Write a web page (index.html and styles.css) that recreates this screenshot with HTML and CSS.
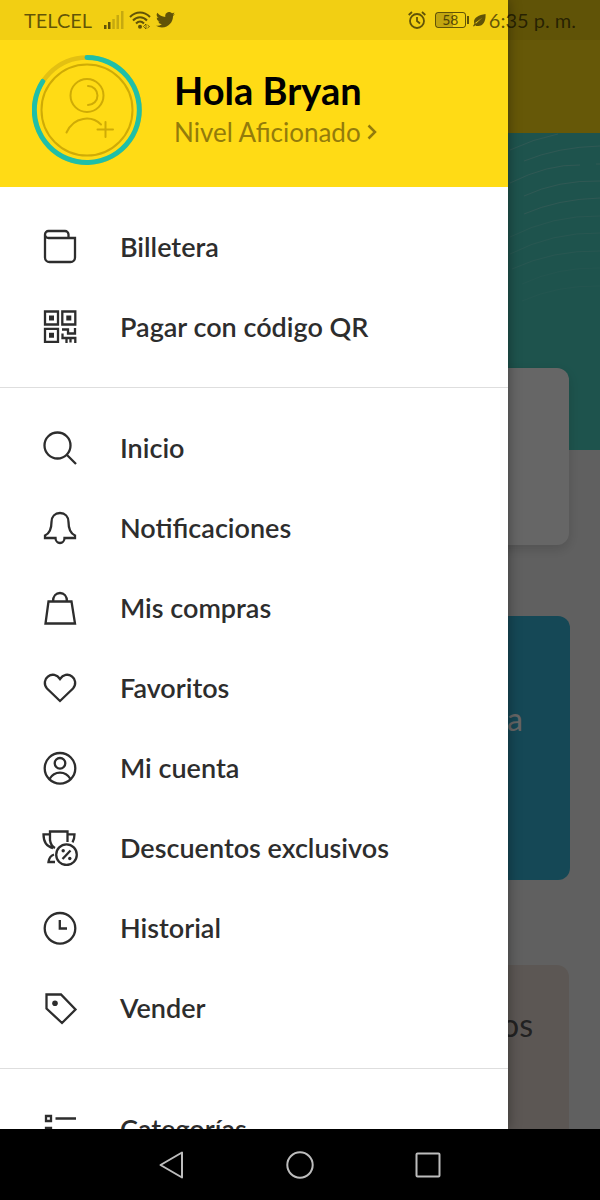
FILE: index.html
```html
<!DOCTYPE html>
<html lang="es">
<head>
  <meta charset="UTF-8" />
  <meta name="viewport" content="width=device-width, initial-scale=1" />
  <title>Menú</title>
  <link rel="stylesheet" href="styles.css">
</head>
<body>
<div class="screen">

  <main class="home">
    <div class="home-bar"></div>
    <div class="hero">
      <svg class="waves" viewBox="0 0 92 180" fill="none" stroke="#fff" stroke-width="1">
        <path d="M2 17Q25 6 50 1M16 28Q50 14 92 13M2 50Q40 31 72 32M88 31h4M16 63Q50 47 92 48M16 81Q50 66 92 65" opacity=".25" />
        <path d="M2 104Q45 82 92 83M2 121Q45 99 92 100M4 136Q45 117 92 118" opacity=".15" />
        <path d="M14 151Q50 134 92 135M14 168Q50 152 92 153" opacity=".08" />
      </svg>
    </div>
    <div class="card card-main"></div>
    <div class="card card-blue">a</div>
    <div class="card card-sand">os</div>
  </main>

  <div class="scrim"></div>

  <aside class="drawer">
    <header class="profile">
      <svg class="avatar" viewBox="0 0 110 110" fill="none" stroke-linecap="round">
        <circle cx="55" cy="55" r="52.5" stroke="#e3c012" stroke-width="4.5" />
        <path d="M55 2.5A52.5 52.5 0 1 1 10.7 26.5" stroke="#1fbfa8" stroke-width="5" />
        <g stroke="#cfab06" stroke-width="2">
          <circle cx="55" cy="55" r="45.5" />
          <circle cx="55" cy="40.5" r="16.5" />
          <path d="M56 31a9.5 9.5 0 0 1 0 19M34.500 77.500C42 61 60 60.500 69 69.500M73.500 67v15M65.500 74.500h15.500" />
        </g>
      </svg>
      <div class="profile-text">
        <h1>Hola Bryan</h1>
        <a href="#nivel">Nivel Aficionado
          <svg class="chevron" viewBox="0 0 10 16" fill="none" stroke="currentColor" stroke-width="2.5"><path d="M1.500 1.500L8 8l-6.500 6.500" /></svg>
        </a>
      </div>
    </header>

    <nav>
      <ul class="menu">
        <li><a href="#billetera">
          <svg class="icon" viewBox="0 0 36 36"><path d="M3 6v22.500a4.500 4.500 0 0 0 4.500 4.500h21a4.500 4.500 0 0 0 4.500-4.500V9H6.500a3.500 3.500 0 0 1 0-7H23a3.500 3.500 0 0 1 3.500 3.500V9" /></svg>
          <span>Billetera</span></a></li>
        <li><a href="#qr">
          <svg class="icon" viewBox="0 0 36 36"><path d="M3 2.500h13v13H3zM20.300 2.500h13v13h-13zM3 19.800h13v13H3z" /><path d="M7 6.500h5v5H7zM24.300 6.500h5v5h-5zM7 23.800h5v5H7z" fill="currentColor" stroke="none" /><path d="M20 20.500h6v4h7v-5.500M20.500 24.500v4.500h4v5M24.500 29h8.800v5M28.500 29v4.500" /></svg>
          <span>Pagar con código QR</span></a></li>
      </ul>

      <ul class="menu">
        <li><a href="#inicio">
          <svg class="icon" viewBox="0 0 36 36"><circle cx="15.500" cy="15.500" r="13" /><path d="M24.500 24.500l9.500 9.500" /></svg>
          <span>Inicio</span></a></li>
        <li><a href="#notificaciones">
          <svg class="icon" viewBox="0 0 36 36"><path d="M3 28v-2.500c4.500-2 6.500-7 6.500-13.500C9.500 6.500 13 3 18 3s8.500 3.500 8.500 9c0 6.500 2 11.500 6.500 13.500V28H22.500a4.500 5 0 0 1-9 0z" /></svg>
          <span>Notificaciones</span></a></li>
        <li><a href="#compras">
          <svg class="icon" viewBox="0 0 36 36"><path d="M6.500 11.500h23l3.500 22H3.500zM11 11.500c0-5.500 3-8.500 7-8.500s7 3 7 8.500" /></svg>
          <span>Mis compras</span></a></li>
        <li><a href="#favoritos">
          <svg class="icon" viewBox="0 0 36 36"><path d="M18 31L5 18.500C1.500 14.500 2.500 9 6 6.500c4-3 9-2 12 2.500 3-4.500 8-5.500 12-2.500 3.500 2.500 4.500 8 1 12z" /></svg>
          <span>Favoritos</span></a></li>
        <li><a href="#cuenta">
          <svg class="icon" viewBox="0 0 36 36"><circle cx="18" cy="18.300" r="15.300" /><circle cx="18" cy="13.300" r="5.300" /><path d="M7.500 29c5-8.500 16-8.500 21 0" /></svg>
          <span>Mi cuenta</span></a></li>
        <li><a href="#descuentos">
          <svg class="icon" viewBox="0 0 36 36"><path d="M8 11V1.500h17.500V12M8 10c.5 4 2 6.500 5 8M8 4.300H1.500c0 7.500 3.500 12.500 9.500 13.700M25.500 4.300H32.500c0 3.500-.5 5.500-2 8M12 24.500c-3 1-5 3.500-5.500 7.500H13" /><circle cx="24.500" cy="24.700" r="10.300" /><path d="M20.500 29l8-8.500" /><circle cx="21.200" cy="20.800" r="1.700" fill="currentColor" stroke="none" /><circle cx="27.800" cy="28.500" r="1.700" fill="currentColor" stroke="none" /></svg>
          <span>Descuentos exclusivos</span></a></li>
        <li><a href="#historial">
          <svg class="icon" viewBox="0 0 36 36"><circle cx="18" cy="18.300" r="15.300" /><path d="M17.800 10v8.500H25" /></svg>
          <span>Historial</span></a></li>
        <li><a href="#vender">
          <svg class="icon" viewBox="0 0 36 36"><path d="M4.500 4.500H19l14.500 15L20 33 4.500 18.500z" /><circle cx="13" cy="13.300" r="2.800" fill="currentColor" stroke="none" /></svg>
          <span>Vender</span></a></li>
      </ul>

      <ul class="menu">
        <li><a href="#categorias">
          <svg class="icon" viewBox="0 0 36 36"><path d="M4 5h5v5H4zM13.500 7.500H34M4 17h5v5H4zM13.500 19.500H34M4 29h5v5H4zM13.500 31.500H34" /></svg>
          <span>Categorías</span></a></li>
      </ul>
    </nav>
  </aside>

  <div class="status">
    <span>TELCEL</span>
    <svg class="signal" viewBox="0 0 20 18"><path d="M0 14h2.500v4H0zM4 11h2.500v7H4z" /><path d="M8.300 8h2.500v10H8.300zM12.500 4H15v14h-2.500zM17 0h2.500v18H17z" opacity=".3" /></svg>
    <svg class="wifi" viewBox="0 0 22 18" fill="none" stroke="currentColor" stroke-width="2"><path d="M1 6C7 0 15 0 21 6M4 9.500c4-4.500 10-4.500 14 0M7 12.500c2.500-2.500 5.500-2.500 8 0" /><circle cx="11" cy="15.800" r="1" /><path d="M17 13l-2.500 2.500L17 18zM18.500 14l2 1.500-2 1.500" stroke-width=".8" /></svg>
    <svg class="bird" viewBox="0 0 24 20"><path d="M24 2.300a9.800 9.800 0 0 1-2.800.8A4.900 4.900 0 0 0 23.300.4a9.900 9.900 0 0 1-3.100 1.200 4.900 4.900 0 0 0-8.400 4.500A14 14 0 0 1 1.700.9a4.900 4.900 0 0 0 1.500 6.600 4.900 4.900 0 0 1-2.200-.6 4.900 4.900 0 0 0 4 4.900 5 5 0 0 1-2.300.1 4.900 4.900 0 0 0 4.600 3.400A9.900 9.900 0 0 1 0 17.300a13.900 13.900 0 0 0 7.500 2.200c9.100 0 14.300-7.700 14-14.700A10 10 0 0 0 24 2.300z" /></svg>
    <span class="spacer"></span>
    <svg class="alarm" viewBox="0 0 18 18" fill="none" stroke="currentColor" stroke-width="1.8"><circle cx="9" cy="10" r="7" /><path d="M9 6v4l3 2.500M.7 4L4 1M17.300 4L14 1" /></svg>
    <span class="battery"><b>58</b></span>
    <svg class="leaf" viewBox="0 0 14 14"><path d="M13.500 0C14 8 11 13.500 5 13c-1.200 0-2-.4-2.600-1L1 13.500 0 13l1.500-2.500C-.5 5 5 1 13.500 0zM3 10.500L10 4 2.500 9.500z" /></svg>
    <span>6:35 p. m.</span>
  </div>
</div>

<div class="navbar">
  <button type="button" aria-label="Atrás"><svg viewBox="0 0 28 28"><path d="M2.500 14L24 1.500v25z" stroke-linejoin="round" /></svg></button>
  <button type="button" aria-label="Inicio"><svg viewBox="0 0 28 28"><circle cx="14" cy="14" r="12.700" /></svg></button>
  <button type="button" aria-label="Recientes"><svg viewBox="0 0 28 28"><rect x="2.500" y="2.500" width="23" height="23" rx="1" /></svg></button>
</div>
</body>
</html>
```
FILE: styles.css
```css
* {
  box-sizing: border-box;
}
body {
  margin: 0;
  height: 100vh;
  display: flex;
  flex-direction: column;
  font-family: "Lato", sans-serif;
  background: #000;
}
a {
  color: inherit;
  text-decoration: none;
}
svg {
  flex: none;
}
.screen {
  position: relative;
  flex: 1;
  min-height: 0;
  overflow: hidden;
}

/* page behind the drawer */
.home {
  background: #f0f0f0;
  min-height: 100%;
}
.home-bar {
  height: 133px;
  background: #ffdb15;
}
.hero {
  height: 317px;
  background: #4bd0c1;
  display: flex;
  justify-content: flex-end;
}
.waves {
  width: 92px;
  height: 180px;
}
.card {
  position: relative;
  margin: 0 31px;
  border-radius: 12px;
  text-align: right;
  font-size: 32px;
  line-height: 40px;
}
.card-main {
  height: 177px;
  margin-top: -82px;
  background: #fff;
  box-shadow: 0 4px 12px rgba(0, 0, 0, 0.15);
}
.card-blue {
  height: 264px;
  margin: 71px 30px 0;
  padding: 83px 47px 0 0;
  background: #35b4d7;
  color: #fff;
}
.card-sand {
  height: 264px;
  margin-top: 85px;
  padding: 40px 36px 0 0;
  background: #e6dad2;
  color: #555;
}
.scrim {
  position: absolute;
  inset: 0;
  background: rgba(0, 0, 0, 0.6);
}

/* drawer */
.drawer {
  position: absolute;
  top: 0;
  bottom: 0;
  left: 0;
  right: 92px;
  overflow: hidden;
  background: #fff;
  color: #2d2d2d;
  box-shadow: 0 0 12px rgba(0, 0, 0, 0.4);
}
.profile {
  display: flex;
  align-items: center;
  gap: 32px;
  height: 187px;
  padding: 40px 32px 8px;
  background: #ffdb15;
}
.avatar {
  width: 110px;
  height: 110px;
}
.profile h1 {
  margin: 0;
  font-size: 38px;
  line-height: 44px;
  font-weight: 700;
  color: #000;
}
.profile a {
  display: flex;
  align-items: center;
  gap: 6px;
  font-size: 26px;
  line-height: 40px;
  color: #937b0b;
}
.chevron {
  width: 10px;
  height: 16px;
}
.menu {
  margin: 0;
  padding: 20px 0;
  list-style: none;
}
.menu + .menu {
  border-top: 1px solid #dedede;
}
.menu a {
  display: flex;
  align-items: center;
  gap: 42px;
  height: 80px;
  padding: 0 42px;
  font-size: 27px;
  font-weight: 600;
  white-space: nowrap;
}
.menu span {
  padding-bottom: 2px;
}
.icon {
  width: 36px;
  height: 36px;
  fill: none;
  stroke: currentColor;
  stroke-width: 2.3;
}

/* system bars */
.status {
  position: absolute;
  top: 0;
  left: 0;
  right: 0;
  height: 40px;
  padding: 0 24px;
  display: flex;
  align-items: center;
  background: rgba(0, 0, 0, 0.05);
  color: rgba(0, 0, 0, 0.6);
  font-size: 20px;
}
.status svg:not([fill]) {
  fill: currentColor;
}
.signal {
  width: 20px;
  height: 18px;
  margin-left: 12px;
}
.wifi {
  width: 22px;
  height: 18px;
  margin-left: 5px;
}
.bird {
  width: 19px;
  height: 16px;
  margin-left: 5px;
}
.spacer {
  flex: 1;
}
.alarm {
  width: 18px;
  height: 18px;
}
.battery {
  position: relative;
  width: 31px;
  height: 16px;
  margin: 0 7px 0 9px;
  border: 1px solid;
  border-radius: 3px;
  font-size: 14px;
  line-height: 14px;
  text-align: center;
}
.battery b {
  display: block;
  font-weight: 500;
  background: linear-gradient(90deg, rgba(0, 0, 0, 0.2) 58%, transparent 58%);
}
.battery::after {
  content: "";
  position: absolute;
  right: -4px;
  top: 3px;
  width: 2px;
  height: 8px;
  background: currentColor;
}
.leaf {
  width: 13px;
  height: 13px;
  margin-right: 3px;
}
.navbar {
  display: flex;
  align-items: center;
  justify-content: center;
  gap: 100px;
  height: 71px;
  background: #000;
}
.navbar button {
  padding: 0;
  width: 28px;
  height: 28px;
  border: 0;
  background: none;
}
.navbar svg {
  display: block;
  fill: none;
  stroke: #bdbdbd;
  stroke-width: 2;
}
```
